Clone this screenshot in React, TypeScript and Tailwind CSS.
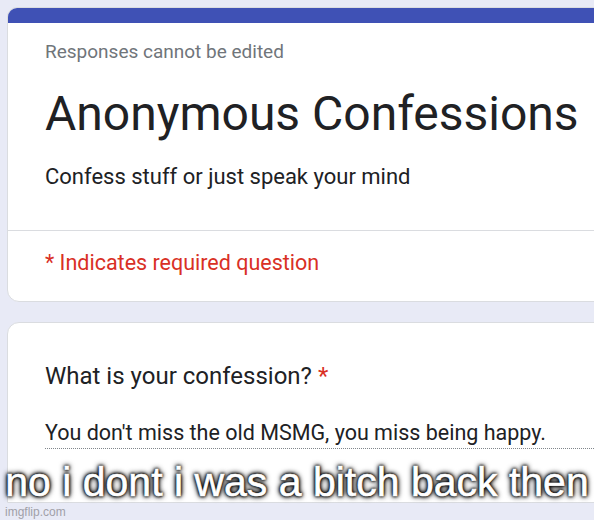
import React from 'react';

const roboto = "font-['Roboto','Liberation_Sans',sans-serif]";

const HeaderCard: React.FC = () => (
  <div className="w-[640px] rounded-t-[10px] rounded-b-[12px] bg-white border border-[#dadce0] overflow-hidden">
    <div className="h-[15px] bg-[#3f51b5]" />
    <div className="pl-[37px] pt-[18px] pb-[40px]">
      <p className="text-[19px] leading-[22px] text-[#70757a]">Responses cannot be edited</p>
      <h1 className="mt-[24px] text-[48px] leading-[54px] text-[#202124]">Anonymous Confessions</h1>
      <p className="mt-[23px] text-[22px] leading-[26px] text-[#202124]">Confess stuff or just speak your mind</p>
    </div>
    <div className="h-px bg-[#dadce0]" />
    <div className="pl-[37px] pt-[19px] pb-[25px]">
      <p className="text-[21.5px] leading-[26px] text-[#d93025]">* Indicates required question</p>
    </div>
  </div>
);

const QuestionCard: React.FC = () => (
  <div className="mt-[20px] w-[640px] h-[181px] rounded-t-[12px] bg-white border border-[#dadce0]">
    <div className="pl-[37px] pt-[39px]">
      <p className="text-[24px] leading-[28px] text-[#202124]">
        What is your confession? <span className="text-[#d93025]">*</span>
      </p>
      <div className="mt-[30px] border-b border-dotted border-[#80868b] pb-[2px]">
        <p className="text-[21.5px] leading-[26px] text-[#202124]">You don't miss the old MSMG, you miss being happy.</p>
      </div>
    </div>
  </div>
);

export default function App() {
  return (
    <div className={`relative w-[594px] h-[520px] overflow-hidden bg-[#e8eaf6] pl-[7px] pt-[7px] ${roboto}`}>
      <HeaderCard />
      <QuestionCard />
      <div className="absolute left-0 right-0 top-[462px] text-center text-[41px] leading-[40px] text-white font-['Liberation_Sans',Arial,sans-serif] [-webkit-text-stroke:0.6px_#fff] [text-shadow:0_0_3px_#000,0_0_3px_#000,0_0_5px_#000,0_0_6px_#000]">
        no i dont i was a bitch back then
      </div>
      <div className="absolute left-[5px] top-[506px] text-[12px] leading-[13px] text-[#a0a0a8] font-['Liberation_Sans',Arial,sans-serif]">
        imgflip.com
      </div>
    </div>
  );
}
